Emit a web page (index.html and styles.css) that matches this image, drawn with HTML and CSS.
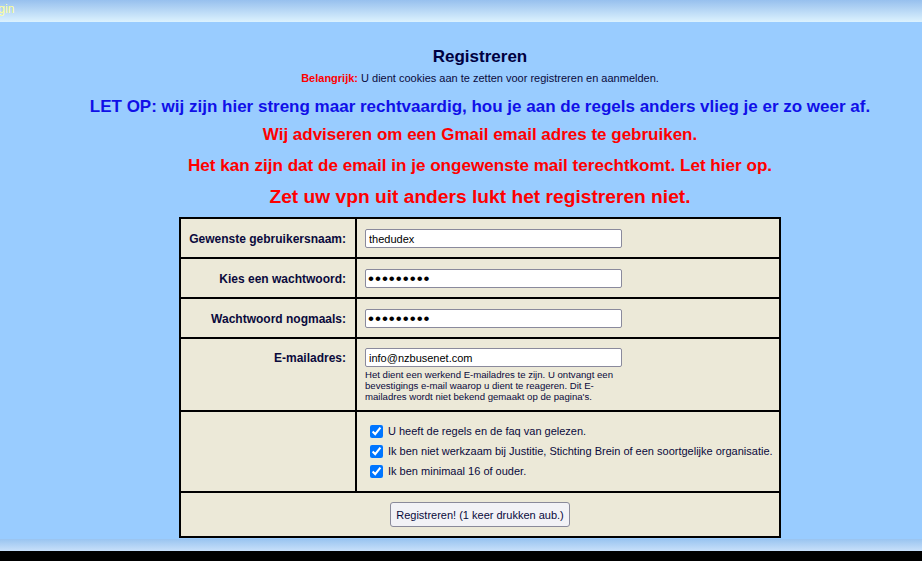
FILE: index.html
```html
<!DOCTYPE html>
<html lang="nl">
<head>
<meta charset="utf-8">
<title>Registreren</title>
<link rel="stylesheet" href="styles.css">
</head>
<body>
<div class="page">
  <div class="topbar"><span class="toplink">Login</span></div>
  <main class="main">
    <h1 class="title">Registreren</h1>
    <p class="note"><b class="imp">Belangrijk:</b> U dient cookies aan te zetten voor registreren en aanmelden.</p>
    <p class="warn blue">LET OP: wij zijn hier streng maar rechtvaardig, hou je aan de regels anders vlieg je er zo weer af.</p>
    <p class="warn red">Wij adviseren om een Gmail email adres te gebruiken.</p>
    <p class="warn red mid">Het kan zijn dat de email in je ongewenste mail terechtkomt. Let hier op.</p>
    <p class="warn red big">Zet uw vpn uit anders lukt het registreren niet.</p>
    <form class="form">
      <table class="reg">
        <colgroup><col class="c1"><col class="c2"></colgroup>
        <tr class="r">
          <td class="lbl">Gewenste gebruikersnaam:</td>
          <td class="fld"><input class="inp" type="text" value="thedudex"></td>
        </tr>
        <tr class="r">
          <td class="lbl">Kies een wachtwoord:</td>
          <td class="fld"><input class="inp pw" type="password" value="123456789"></td>
        </tr>
        <tr class="r">
          <td class="lbl">Wachtwoord nogmaals:</td>
          <td class="fld"><input class="inp pw" type="password" value="123456789"></td>
        </tr>
        <tr class="r">
          <td class="lbl top">E-mailadres:</td>
          <td class="fld email"><input class="inp" type="text" value="info@nzbusenet.com">
            <div class="help">Het dient een werkend E-mailadres te zijn. U ontvangt een bevestigings e-mail waarop u dient te reageren. Dit E-mailadres wordt niet bekend gemaakt op de pagina's.</div>
          </td>
        </tr>
        <tr class="r">
          <td class="lbl"></td>
          <td class="fld checks">
            <label class="chk"><input type="checkbox" checked> U heeft de regels en de faq van gelezen.</label>
            <label class="chk"><input type="checkbox" checked> Ik ben niet werkzaam bij Justitie, Stichting Brein of een soortgelijke organisatie.</label>
            <label class="chk"><input type="checkbox" checked> Ik ben minimaal 16 of ouder.</label>
          </td>
        </tr>
        <tr class="r">
          <td class="submit" colspan="2"><button class="btn" type="button">Registreren! (1 keer drukken aub.)</button></td>
        </tr>
      </table>
    </form>
  </main>
  <div class="bottombar"></div>
</div>
</body>
</html>
```
FILE: styles.css
```css
html {
  background: #000;
}
body {
  margin: 0;
  font-family: "Liberation Sans", Arial, sans-serif;
  color: #0a0a3c;
}
.page {
  width: 922px;
  background: #99ccff;
}
.topbar {
  height: 22px;
  overflow: hidden;
  background: linear-gradient(#97c0ee, #dcf2fe);
}
.toplink {
  display: block;
  margin-left: -15px;
  padding-top: 2px;
  font-size: 12px;
  color: #ffff99;
}
.main {
  padding: 25px 0 1px 38px;
  text-align: center;
}
.title {
  margin: 0;
  font-size: 17px;
  line-height: 20px;
  font-weight: bold;
  color: #000040;
}
.note {
  margin: 4px 0 0;
  font-size: 11px;
  line-height: 14px;
}
.imp {
  color: #ff0000;
}
.warn {
  margin: 0;
  font-weight: bold;
  font-size: 17px;
  line-height: 31px;
}
.warn.blue {
  margin-top: 9px;
  line-height: 25px;
  color: #1010e8;
}
.warn.red {
  color: #ff0000;
}
.warn.mid {
  font-size: 17.1px;
  line-height: 31px;
}
.warn.big {
  font-size: 19.2px;
  line-height: 32px;
}
.form {
  margin: 4px 0 0;
}
.reg {
  margin: 0 auto;
  width: 602px;
  table-layout: fixed;
  border: 1px solid #000;
  border-spacing: 0;
  background: #ece9d8;
  font-size: 11px;
}
.c1 {
  width: 176px;
}
.reg td {
  border: 1px solid #000;
  padding: 10px 8px 9px;
}
.lbl {
  text-align: right;
  font-weight: bold;
  font-size: 12px;
  white-space: nowrap;
  padding-right: 9px !important;
}
.lbl.top {
  vertical-align: top;
  padding-top: 12px !important;
}
.fld {
  text-align: left;
}
.inp {
  display: block;
  box-sizing: border-box;
  width: 257px;
  height: 19px;
  margin: 0;
  padding: 0 3px;
  border: 1px solid #8a8a9c;
  border-radius: 2px;
  background: #fff;
  font-family: "Liberation Sans", Arial, sans-serif;
  font-size: 11px;
  color: #000;
}
.pw {
  font-size: 17px;
  letter-spacing: 1px;
  padding-left: 2px;
}
.email {
  vertical-align: top;
  padding-top: 9px !important;
  padding-bottom: 8px !important;
}
.help {
  width: 257px;
  margin-top: 2px;
  font-size: 9.6px;
  line-height: 11px;
}
.checks {
  padding: 9px 12px 10px !important;
}
.chk {
  display: flex;
  align-items: center;
  gap: 5px;
  height: 20px;
  white-space: nowrap;
}
.chk input {
  flex: none;
  width: 13px;
  height: 13px;
  margin: 0 0 0 1px;
}
.submit {
  text-align: center;
  padding: 9px 8px 9px !important;
}
.btn {
  height: 25px;
  padding: 0 5px;
  border: 1px solid #8a8a9a;
  border-radius: 3px;
  background: #f2f2f6;
  font-family: "Liberation Sans", Arial, sans-serif;
  font-size: 11px;
  color: #0a0a3c;
}
.bottombar {
  height: 12px;
  background: linear-gradient(#99c4f0, #c8e0fa);
}
```
